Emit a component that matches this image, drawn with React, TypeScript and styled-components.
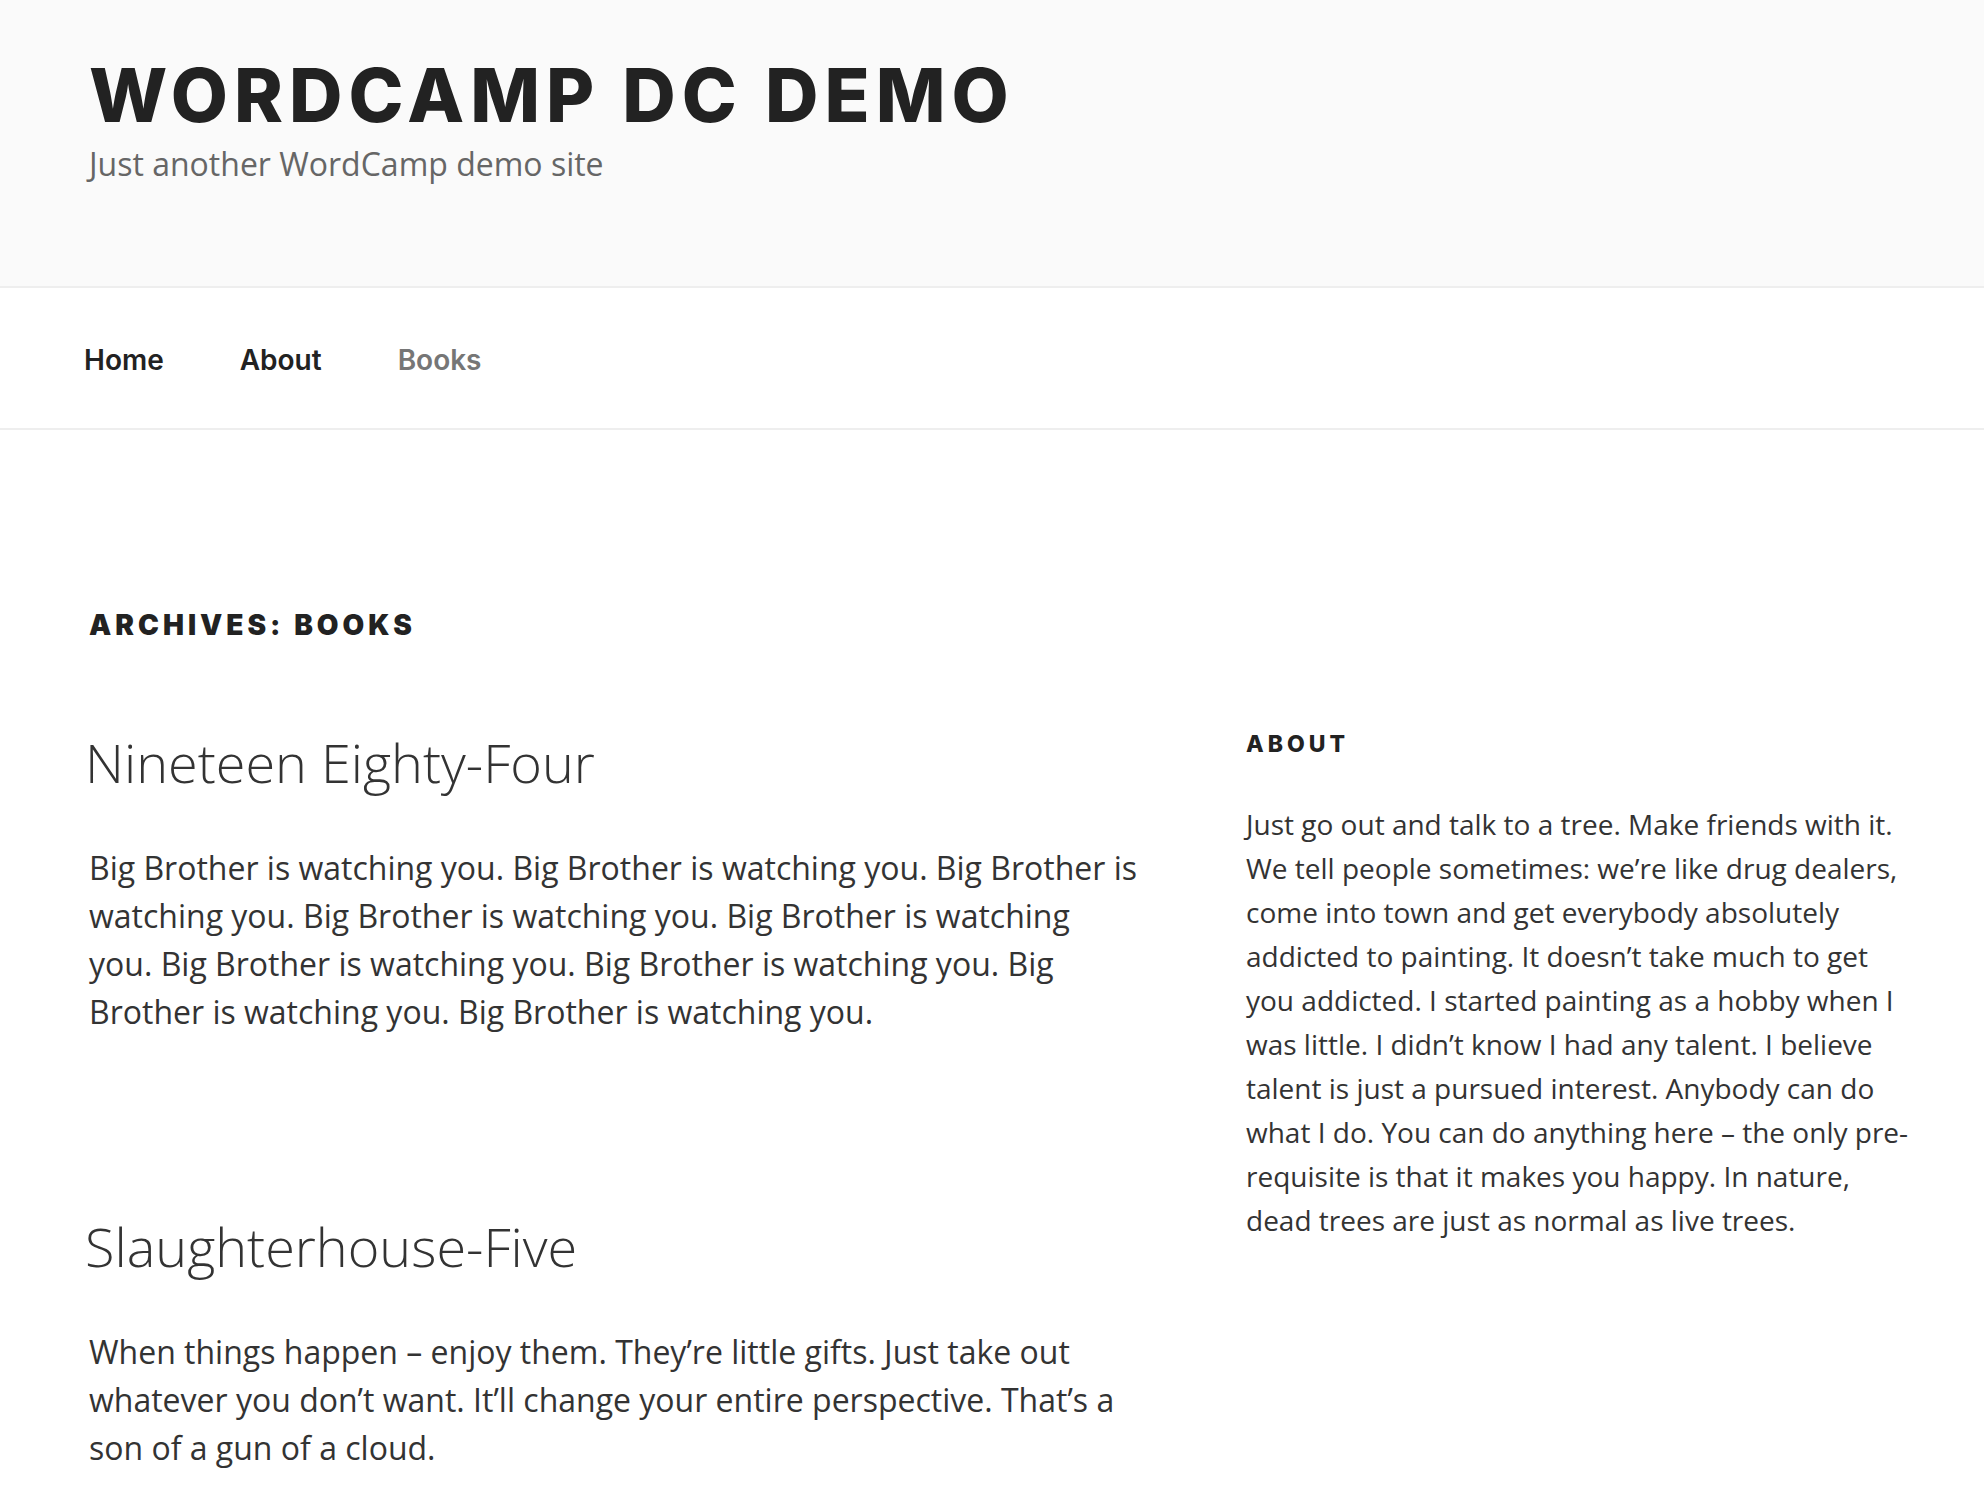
import React from 'react';
import styled, { createGlobalStyle } from 'styled-components';

const heading = 'Inter, "Liberation Sans", sans-serif';
const text = '"Open Sans", "Liberation Sans", sans-serif';

const GlobalStyle = createGlobalStyle`
  *, *::before, *::after { box-sizing: border-box; }
  body {
    margin: 0;
    background: #fff;
    color: #333;
    font-family: ${text};
    font-size: 32px;
    line-height: 48px;
  }
  h1, h2, p, ul { margin: 0; padding: 0; }
  a { color: inherit; text-decoration: none; }
`;

const Page = styled.div`
  min-height: 100vh;
  overflow-x: hidden;
`;

const Branding = styled.header`
  padding: 55px 89px 98px;
  background: #fafafa;
`;

const SiteTitle = styled.h1`
  margin-bottom: 5px;
  color: #222;
  font-family: ${heading};
  font-size: 74px;
  font-weight: 800;
  line-height: 80px;
  letter-spacing: 6px;
  text-transform: uppercase;
`;

const Tagline = styled.p`
  color: #666;
`;

const Nav = styled.nav`
  padding: 56px 84px 52px;
  border-top: 2px solid #eee;
  border-bottom: 2px solid #eee;
`;

const Menu = styled.ul`
  display: flex;
  gap: 76px;
  list-style: none;
`;

const MenuItem = styled.li`
  display: flex;
`;

const MenuLink = styled.a<{ $current?: boolean }>`
  color: ${(p) => (p.$current ? '#767676' : '#222')};
  font-family: ${heading};
  font-size: 28px;
  font-weight: 600;
  line-height: 32px;
`;

const Content = styled.div`
  padding: 173px 73px 96px 89px;
`;

const ArchiveTitle = styled.h1`
  margin-bottom: 79px;
  color: #222;
  font-family: ${heading};
  font-size: 28px;
  font-weight: 900;
  line-height: 44px;
  letter-spacing: 4px;
  text-transform: uppercase;
`;

const Columns = styled.div`
  display: grid;
  grid-template-columns: 210fr 133fr;
  column-gap: 107px;
  align-items: start;
`;

const Posts = styled.main`
  display: grid;
  gap: 174px;
`;

const PostTitle = styled.h2`
  margin: 0 0 46px -4px;
  font-size: 54px;
  font-weight: 300;
  line-height: 72px;
`;

const Sidebar = styled.aside`
  font-size: 28px;
  line-height: 44px;
`;

const WidgetTitle = styled.h2`
  margin-bottom: 40px;
  color: #222;
  font-family: ${heading};
  font-size: 23px;
  font-weight: 800;
  line-height: 36px;
  letter-spacing: 4px;
  text-transform: uppercase;
`;

const menu = [
  { label: 'Home', current: false },
  { label: 'About', current: false },
  { label: 'Books', current: true },
];

const posts = [
  {
    title: 'Nineteen Eighty-Four',
    body: Array(9).fill('Big Brother is watching you.').join(' '),
  },
  {
    title: 'Slaughterhouse-Five',
    body:
      'When things happen – enjoy them. They’re little gifts. Just take out whatever you don’t want. It’ll change your entire perspective. That’s a son of a gun of a cloud.',
  },
];

export default function App() {
  return (
    <Page>
      <GlobalStyle />
      <Branding>
        <SiteTitle>
          <a href="#home">WordCamp DC Demo</a>
        </SiteTitle>
        <Tagline>Just another WordCamp demo site</Tagline>
      </Branding>
      <Nav aria-label="Top Menu">
        <Menu>
          {menu.map((item) => (
            <MenuItem key={item.label}>
              <MenuLink
                href={`#${item.label.toLowerCase()}`}
                $current={item.current}
                aria-current={item.current ? 'page' : undefined}
              >
                {item.label}
              </MenuLink>
            </MenuItem>
          ))}
        </Menu>
      </Nav>
      <Content>
        <ArchiveTitle>Archives: Books</ArchiveTitle>
        <Columns>
          <Posts>
            {posts.map((post) => (
              <article key={post.title}>
                <PostTitle>
                  <a href="#post">{post.title}</a>
                </PostTitle>
                <p>{post.body}</p>
              </article>
            ))}
          </Posts>
          <Sidebar>
            <WidgetTitle>About</WidgetTitle>
            <p>
              Just go out and talk to a tree. Make friends with it. We tell people sometimes: we’re
              like drug dealers, come into town and get everybody absolutely addicted to painting. It
              doesn’t take much to get you addicted. I started painting as a hobby when I was little.
              I didn’t know I had any talent. I believe talent is just a pursued interest. Anybody can
              do what I do. You can do anything here – the only pre-requisite is that it makes you
              happy. In nature, dead trees are just as normal as live trees.
            </p>
          </Sidebar>
        </Columns>
      </Content>
    </Page>
  );
}
